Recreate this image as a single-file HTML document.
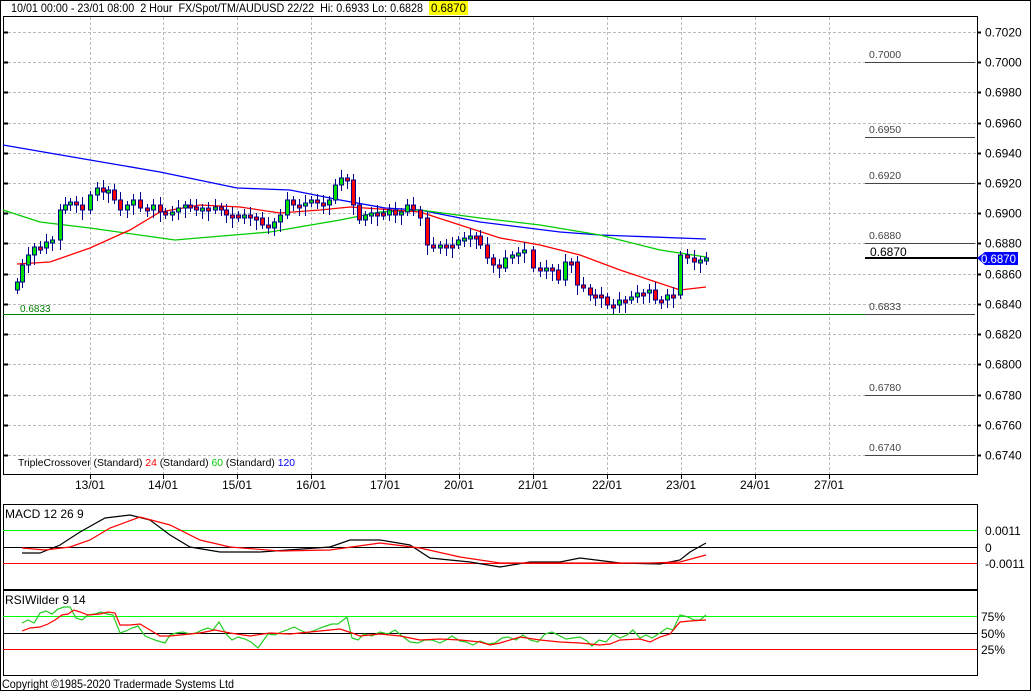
<!DOCTYPE html>
<html><head><meta charset="utf-8"><style>
body{margin:0;background:#fff;width:1032px;height:692px;overflow:hidden}
svg{display:block;font-family:"Liberation Sans",sans-serif}
</style></head><body>
<svg id="s" width="1032" height="692" xmlns="http://www.w3.org/2000/svg">
<rect x="0" y="0" width="1032" height="692" fill="#fff"/>
<rect x="0.5" y="0.5" width="1030" height="690" fill="none" stroke="#000"/>
<rect x="429" y="1" width="39" height="14" fill="#ffff00"/>
<text x="11" y="12" font-size="12" fill="#000" textLength="412" lengthAdjust="spacingAndGlyphs" xml:space="preserve">10/01 00:00 - 23/01 08:00  2 Hour  FX/Spot/TM/AUDUSD 22/22  Hi: 0.6933 Lo: 0.6828</text>
<text x="431" y="12" font-size="12" fill="#000" textLength="35" lengthAdjust="spacingAndGlyphs">0.6870</text>
<g id="grid" stroke="#bbb" stroke-dasharray="3,2" stroke-width="1"></g>
<g id="lv"></g>
<rect x="3.5" y="16.5" width="974" height="458" fill="none" stroke="#000"/>
<rect x="3.5" y="504.5" width="974" height="85" fill="none" stroke="#000"/>
<line x1="3" y1="590" x2="978" y2="590" stroke="#000" stroke-width="2"/>
<rect x="3.5" y="590.5" width="974" height="85" fill="none" stroke="#000"/>
<line x1="3" y1="314.5" x2="865" y2="314.5" stroke="#008000"/>
<text x="20" y="312" font-size="10" fill="#008000">0.6833</text>
<g id="ma"></g>
<g id="cd"></g>
<text x="18" y="466" font-size="10.5" fill="#000" textLength="277" lengthAdjust="spacingAndGlyphs">TripleCrossover (Standard) <tspan fill="#f00">24</tspan> (Standard) <tspan fill="#0c0">60</tspan> (Standard) <tspan fill="#00f">120</tspan></text>
<g id="dates" font-size="12" text-anchor="middle"></g>
<line x1="3" y1="530.5" x2="977" y2="530.5" stroke="#0f0"/>
<line x1="3" y1="547.5" x2="977" y2="547.5" stroke="#000"/>
<line x1="3" y1="563.5" x2="977" y2="563.5" stroke="#f00"/>
<text x="5" y="518" font-size="12">MACD 12 26 9</text>
<text x="985" y="535" font-size="12">0.0011</text>
<text x="985" y="552" font-size="12">0</text>
<text x="985" y="568" font-size="12">-0.0011</text>
<line x1="3" y1="616.5" x2="977" y2="616.5" stroke="#0f0"/>
<line x1="3" y1="633.5" x2="977" y2="633.5" stroke="#000"/>
<line x1="3" y1="649.5" x2="977" y2="649.5" stroke="#f00"/>
<text x="5" y="604" font-size="12">RSIWilder 9 14</text>
<text x="981" y="621" font-size="12">75%</text>
<text x="981" y="638" font-size="12">50%</text>
<text x="981" y="654" font-size="12">25%</text>
<g id="ind" fill="none"></g>
<text x="2" y="688" font-size="12" textLength="232" lengthAdjust="spacingAndGlyphs">Copyright ©1985-2020 Tradermade Systems Ltd</text>
<polygon points="977,258 985,252 1018,252 1018,265 985,265" fill="#0000ff"/>
<text x="981" y="263" font-size="12" fill="#fff" textLength="35" lengthAdjust="spacingAndGlyphs">0.6870</text>
</svg>
<script>
var NS="http://www.w3.org/2000/svg";
function el(p,t,a,txt){var e=document.createElementNS(NS,t);for(var k in a)e.setAttribute(k,a[k]);if(txt!==undefined)e.textContent=txt;document.getElementById(p).appendChild(e);return e;}
function Y(p){return 32+(0.7020-p)/0.002*30.21;}
for(var i=0;i<15;i++){var p=0.7020-i*0.002,y=Math.round(Y(p))+0.5;
el('grid','line',{x1:3,y1:y,x2:977,y2:y});
el('lv','line',{x1:977,y1:y,x2:981,y2:y,stroke:'#000','stroke-width':2});
el('lv','line',{x1:4,y1:y,x2:8,y2:y,stroke:'#000','stroke-width':2});
el('lv','text',{x:985,y:y+4,'font-size':12},p.toFixed(4));}
var xs=[90,163,237,311,385,459,533,607,681,755,829],ds=["13/01","14/01","15/01","16/01","17/01","20/01","21/01","22/01","23/01","24/01","27/01"];
xs.forEach(function(x,i){el('grid','line',{x1:x+.5,y1:17,x2:x+.5,y2:474});
el('lv','line',{x1:x+.5,y1:474,x2:x+.5,y2:479,stroke:'#000'});
el('dates','text',{x:x,y:489},ds[i]);});
[[0.7000,62],[0.6950,137],[0.6920,183],[0.6880,243],[0.6833,314],[0.6780,395],[0.6740,455]].forEach(function(a){
el('lv','line',{x1:865,y1:a[1]+.5,x2:975,y2:a[1]+.5,stroke:'#444'});
el('lv','text',{x:869,y:a[1]-4,'font-size':10.5,fill:'#444'},a[0].toFixed(4));});
el('lv','line',{x1:865,y1:258,x2:977,y2:258,stroke:'#000','stroke-width':2});
el('lv','text',{x:870,y:256,'font-size':12},'0.6870');
function pl(g,pts,c,w){el(g,'polyline',{points:pts.map(function(p){return p.join(',')}).join(' '),stroke:c,'stroke-width':w||1.3,fill:'none'});}
pl('ma',[[3,145],[90,160],[160,172],[237,188],[290,190],[340,200],[385,208],[420,210],[480,222],[560,232],[600,235],[706,239]],'#0000ff');
pl('ma',[[3,210],[40,222],[90,228],[175,240],[210,237],[270,232],[340,220],[380,212],[420,210],[480,218],[540,225],[600,235],[660,250],[706,257]],'#0c0');
pl('ma',[[17,264],[50,262],[90,248],[130,230],[160,212],[200,205],[240,207],[280,213],[320,210],[350,207],[380,209],[420,212],[460,225],[500,238],[540,245],[580,255],[620,270],[650,280],[680,290],[706,287]],'#f00');
var c=[[17,282],[22,265],[28,255],[34,247],[40,248],[46,242],[52,240],[60,210],[65,205],[70,202],[76,205],[82,210],[90,195],[97,188],[103,192],[108,190],[114,200],[120,210],[127,205],[133,200],[140,208],[147,210],[153,205],[160,212],[165,215],[172,212],[178,208],[185,205],[190,207],[196,210],[202,208],[208,210],[215,207],[221,210],[226,215],[232,215],[238,217],[244,215],[250,217],[256,218],[262,225],[268,228],[274,222],[280,215],[287,200],[293,205],[299,205],[305,203],[311,200],[317,203],[323,205],[329,200],[335,185],[341,178],[347,180],[353,205],[359,220],[365,215],[371,213],[377,213],[383,215],[389,210],[395,215],[401,212],[407,205],[413,210],[420,218],[427,245],[433,248],[440,245],[446,245],[452,245],[458,240],[464,238],[470,236],[476,236],[480,245],[487,258],[493,265],[499,268],[505,258],[512,255],[518,253],[524,250],[533,268],[540,270],[546,268],[552,270],[558,280],[565,262],[571,262],[577,285],[583,288],[590,295],[595,295],[601,297],[607,305],[613,305],[619,300],[625,300],[631,297],[637,293],[643,293],[649,290],[655,300],[661,300],[667,295],[673,295],[680,255],[687,258],[694,262],[700,260],[706,258]];
for(var i=0;i<c.length;i++){var x=c[i][0],cl=c[i][1],op=i?c[i-1][1]:cl+8;var t=Math.min(op,cl),b=Math.max(op,cl);if(b-t<3)b=t+3;
el('cd','line',{x1:x+.5,y1:t-4-(i%3)*2,x2:x+.5,y2:b+4+(i%4)*2,stroke:'#00008b'});
el('cd','rect',{x:x-1.5,y:t,width:4,height:b-t,fill:cl<op?'#00e000':'#f00',stroke:'#00008b','stroke-width':1});}
pl('ind',[[22,553],[40,553],[60,545],[80,532],[105,518],[130,515],[150,520],[170,535],[190,547],[220,552],[260,552],[330,547],[350,540],[380,540],[410,545],[430,558],[470,562],[500,567],[530,562],[560,562],[580,558],[620,563],[660,564],[680,560],[690,552],[706,543]],'#000',1.2);
pl('ind',[[22,548],[45,550],[70,547],[90,540],[110,528],[140,517],[170,525],[200,540],[230,547],[280,551],[330,550],[380,543],[420,548],[460,557],[500,563],[540,563],[600,563],[650,563],[680,562],[706,555]],'#f00',1.2);
var g=[[22,623],[28,620],[34,623],[40,613],[46,611],[52,614],[58,609],[64,607],[70,607],[76,618],[82,620],[88,615],[95,614],[101,612],[107,614],[113,615],[120,633],[126,631],[132,628],[138,626],[145,636],[152,639],[158,641],[165,643],[170,635],[176,633],[183,632],[190,634],[196,633],[202,630],[208,628],[213,630],[219,622],[226,634],[232,640],[238,637],[245,639],[251,642],[258,648],[263,641],[268,634],[275,635],[281,632],[287,630],[294,627],[300,630],[307,633],[313,631],[320,628],[326,626],[332,624],[338,624],[347,617],[352,638],[358,640],[364,634],[372,636],[380,632],[388,634],[395,630],[402,636],[410,642],[418,643],[425,640],[432,640],[440,643],[446,640],[452,636],[460,641],[466,642],[473,645],[480,641],[488,644],[495,643],[502,638],[508,637],[516,640],[523,635],[530,640],[538,642],[545,634],[552,632],[560,636],[566,639],[573,638],[580,637],[587,641],[592,646],[599,640],[606,642],[613,634],[620,638],[627,635],[633,630],[640,638],[646,635],[652,638],[660,633],[667,628],[673,630],[680,615],[688,617],[694,620],[700,620],[706,615]];
pl('ind',g,'#2c2',1.2);
var r=[[22,631],[30,628],[40,627],[48,624],[55,620],[62,615],[68,614],[74,610],[80,612],[88,615],[100,614],[108,612],[115,613],[120,625],[130,625],[140,624],[150,630],[160,636],[170,636],[180,635],[200,633],[215,630],[230,633],[250,636],[270,633],[290,634],[300,633],[320,631],[340,629],[352,633],[360,636],[380,634],[400,636],[420,640],[440,639],[460,640],[480,642],[490,645],[500,643],[520,637],[540,640],[560,642],[580,643],[600,645],[610,644],[620,640],[640,639],[650,642],[660,637],[670,634],[680,622],[690,621],[706,620]];
pl('ind',r,'#f00',1.2);
</script>
</body></html>
